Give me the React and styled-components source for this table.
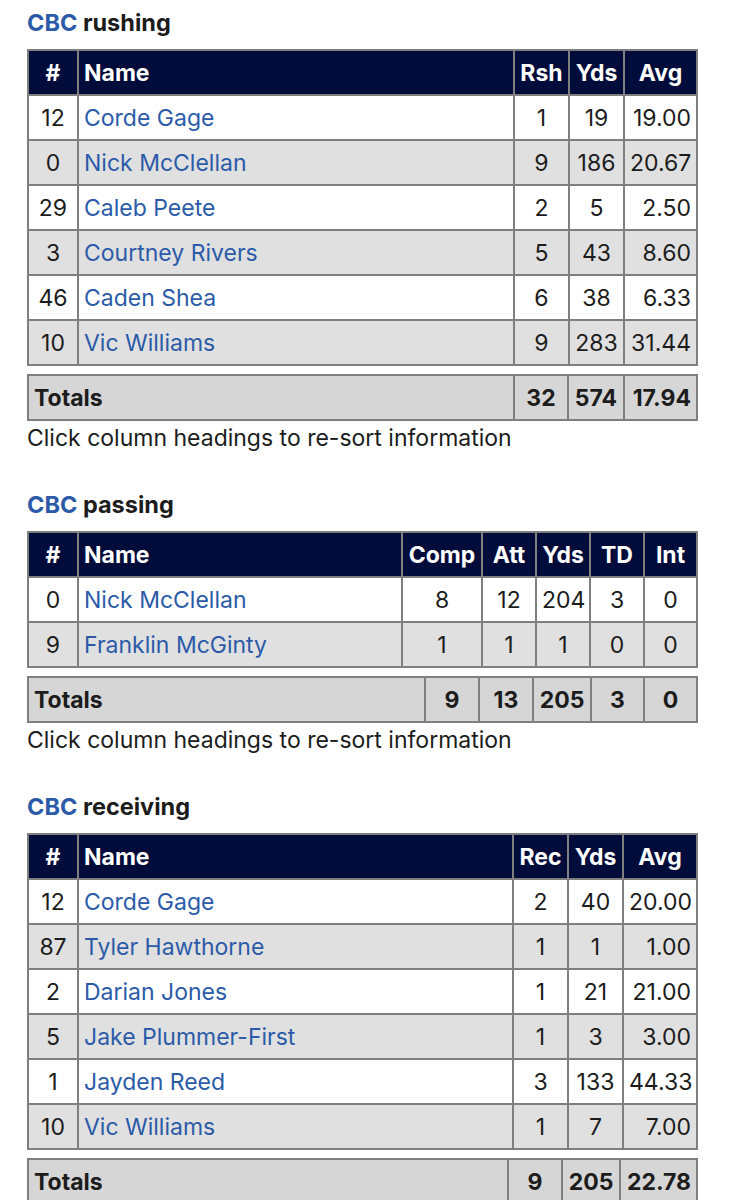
import React from "react";
import styled, { createGlobalStyle } from "styled-components";

const GlobalStyle = createGlobalStyle`
  body {
    margin: 0;
    background: #ffffff;
    font-family: Inter, "Liberation Sans", Arial, sans-serif;
    color: #1c1c1c;
  }
`;

const Page = styled.div`
  padding: 9px 0 0 27px;
  width: 702px;
`;

const Section = styled.section`
  margin-bottom: 39px;
`;

const Title = styled.h2`
  margin: 0 0 12px 0;
  font-size: 23.5px;
  line-height: 28px;
  font-weight: bold;
  color: #1c1c1c;
`;

const Team = styled.span`
  color: #2b5ba8;
`;

const Table = styled.table`
  border-collapse: collapse;
  table-layout: fixed;
  width: 671px;
  border: 2px solid #7f7f7f;
  margin-top: ${(p) => (p.$totals ? "8px" : "0")};
`;

const Row = styled.tr`
  height: 45px;
  background: ${(p) =>
    p.$head ? "#020c3a" : p.$totals ? "#d6d6d6" : p.$shade ? "#e0e0e0" : "#ffffff"};
`;

const HeadCell = styled.th`
  border: 2px solid #7f7f7f;
  padding: 0 5px;
  font-size: 23px;
  font-weight: bold;
  color: #ffffff;
  text-align: ${(p) => p.$align || "center"};
  white-space: nowrap;
`;

const Cell = styled.td`
  border: 2px solid #7f7f7f;
  padding: 0 5px;
  font-size: 23px;
  font-weight: ${(p) => (p.$bold ? "bold" : "normal")};
  color: #1c1c1c;
  text-align: ${(p) => p.$align || "center"};
  white-space: nowrap;
`;

const PlayerLink = styled.a`
  color: #2b5ba8;
  text-decoration: none;
`;

const Note = styled.p`
  margin: 3px 0 0 0;
  font-size: 23px;
  line-height: 28px;
  color: #1c1c1c;
`;

const sections = [
  {
    kind: "rushing",
    cols: [
      { label: "#", w: 50 },
      { label: "Name", w: 436, align: "left" },
      { label: "Rsh", w: 55 },
      { label: "Yds", w: 55 },
      { label: "Avg", w: 73, align: "right" },
    ],
    rows: [
      ["12", "Corde Gage", "1", "19", "19.00"],
      ["0", "Nick McClellan", "9", "186", "20.67"],
      ["29", "Caleb Peete", "2", "5", "2.50"],
      ["3", "Courtney Rivers", "5", "43", "8.60"],
      ["46", "Caden Shea", "6", "38", "6.33"],
      ["10", "Vic Williams", "9", "283", "31.44"],
    ],
    totalWidths: [486, 54, 56, 73],
    totals: ["32", "574", "17.94"],
    totalAlign: ["center", "center", "right"],
  },
  {
    kind: "passing",
    cols: [
      { label: "#", w: 50 },
      { label: "Name", w: 324, align: "left" },
      { label: "Comp", w: 80 },
      { label: "Att", w: 54 },
      { label: "Yds", w: 54 },
      { label: "TD", w: 54 },
      { label: "Int", w: 53 },
    ],
    rows: [
      ["0", "Nick McClellan", "8", "12", "204", "3", "0"],
      ["9", "Franklin McGinty", "1", "1", "1", "0", "0"],
    ],
    totalWidths: [397, 54, 54, 58, 53, 53],
    totals: ["9", "13", "205", "3", "0"],
    totalAlign: ["center", "center", "center", "center", "center"],
  },
  {
    kind: "receiving",
    cols: [
      { label: "#", w: 50 },
      { label: "Name", w: 435, align: "left" },
      { label: "Rec", w: 55 },
      { label: "Yds", w: 55 },
      { label: "Avg", w: 74, align: "right" },
    ],
    rows: [
      ["12", "Corde Gage", "2", "40", "20.00"],
      ["87", "Tyler Hawthorne", "1", "1", "1.00"],
      ["2", "Darian Jones", "1", "21", "21.00"],
      ["5", "Jake Plummer-First", "1", "3", "3.00"],
      ["1", "Jayden Reed", "3", "133", "44.33"],
      ["10", "Vic Williams", "1", "7", "7.00"],
    ],
    totalWidths: [480, 54, 58, 77],
    totals: ["9", "205", "22.78"],
    totalAlign: ["center", "center", "right"],
  },
];

const StatTable = ({ cols, rows }) => (
  <Table>
    <colgroup>
      {cols.map((c, i) => (
        <col key={i} style={{ width: c.w }} />
      ))}
    </colgroup>
    <thead>
      <Row $head>
        {cols.map((c) => (
          <HeadCell key={c.label} $align={c.align === "left" ? "left" : "center"}>
            {c.label}
          </HeadCell>
        ))}
      </Row>
    </thead>
    <tbody>
      {rows.map((r, i) => (
        <Row key={i} $shade={i % 2 === 1}>
          {r.map((v, j) =>
            j === 1 ? (
              <Cell key={j} $align="left">
                <PlayerLink href="#">{v}</PlayerLink>
              </Cell>
            ) : (
              <Cell key={j} $align={cols[j].align}>
                {v}
              </Cell>
            )
          )}
        </Row>
      ))}
    </tbody>
  </Table>
);

const TotalsTable = ({ widths, values, aligns }) => (
  <Table $totals>
    <colgroup>
      {widths.map((w, i) => (
        <col key={i} style={{ width: w }} />
      ))}
    </colgroup>
    <tbody>
      <Row $totals>
        <Cell $bold $align="left">
          Totals
        </Cell>
        {values.map((v, i) => (
          <Cell key={i} $bold $align={aligns[i]}>
            {v}
          </Cell>
        ))}
      </Row>
    </tbody>
  </Table>
);

export default function App() {
  return (
    <Page>
      <GlobalStyle />
      {sections.map((s) => (
        <Section key={s.kind}>
          <Title>
            <Team>CBC</Team> {s.kind}
          </Title>
          <StatTable cols={s.cols} rows={s.rows} />
          <TotalsTable widths={s.totalWidths} values={s.totals} aligns={s.totalAlign} />
          <Note>Click column headings to re-sort information</Note>
        </Section>
      ))}
    </Page>
  );
}
